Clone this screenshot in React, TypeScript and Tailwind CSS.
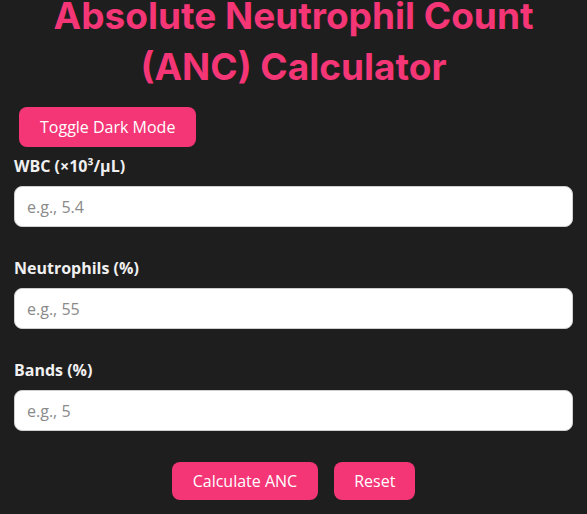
import { useState } from "react";

const pink = "bg-[#f43576] hover:bg-[#e02a68]";

function Field({ label, placeholder, value, onChange }: { label: string; placeholder: string; value: string; onChange: (v: string) => void }) {
  return (
    <div className="flex flex-col">
      <label className="mb-[9px] text-[16px] font-bold leading-[22px] text-[#f0f0f0]">{label}</label>
      <input
        type="number"
        value={value}
        onChange={(e) => onChange(e.target.value)}
        placeholder={placeholder}
        className="h-[41px] w-full rounded-lg border border-[#cfcfcf] bg-white px-3 text-[16px] text-[#222] outline-none placeholder:text-[#8a8a8a]"
      />
    </div>
  );
}

export default function App() {
  const [wbc, setWbc] = useState("");
  const [neut, setNeut] = useState("");
  const [bands, setBands] = useState("");

  return (
    <div className="min-h-[514px] overflow-hidden bg-[#1e1e1e] font-['Open_Sans',sans-serif] text-white">
      <h1 className="-mt-[10px] text-center font-['Inter',sans-serif] text-[37px] font-bold leading-[51px] text-[#f43576]">
        Absolute Neutrophil Count
        <br />
        (ANC) Calculator
      </h1>
      <div className="px-[14px]">
        <button type="button" className={`mt-[15px] ml-[5px] h-[40px] rounded-lg px-[21px] text-[16px] text-white ${pink}`}>
          Toggle Dark Mode
        </button>
        <div className="mt-[8px] flex flex-col gap-[30px]">
          <Field label="WBC (×10³/μL)" placeholder="e.g., 5.4" value={wbc} onChange={setWbc} />
          <Field label="Neutrophils (%)" placeholder="e.g., 55" value={neut} onChange={setNeut} />
          <Field label="Bands (%)" placeholder="e.g., 5" value={bands} onChange={setBands} />
        </div>
        <div className="mt-[31px] flex justify-center gap-4">
          <button type="button" className={`h-[38px] rounded-lg px-[21px] text-[16px] text-white ${pink}`}>
            Calculate ANC
          </button>
          <button type="button" className={`h-[38px] rounded-lg px-5 text-[16px] text-white ${pink}`}>
            Reset
          </button>
        </div>
      </div>
    </div>
  );
}
